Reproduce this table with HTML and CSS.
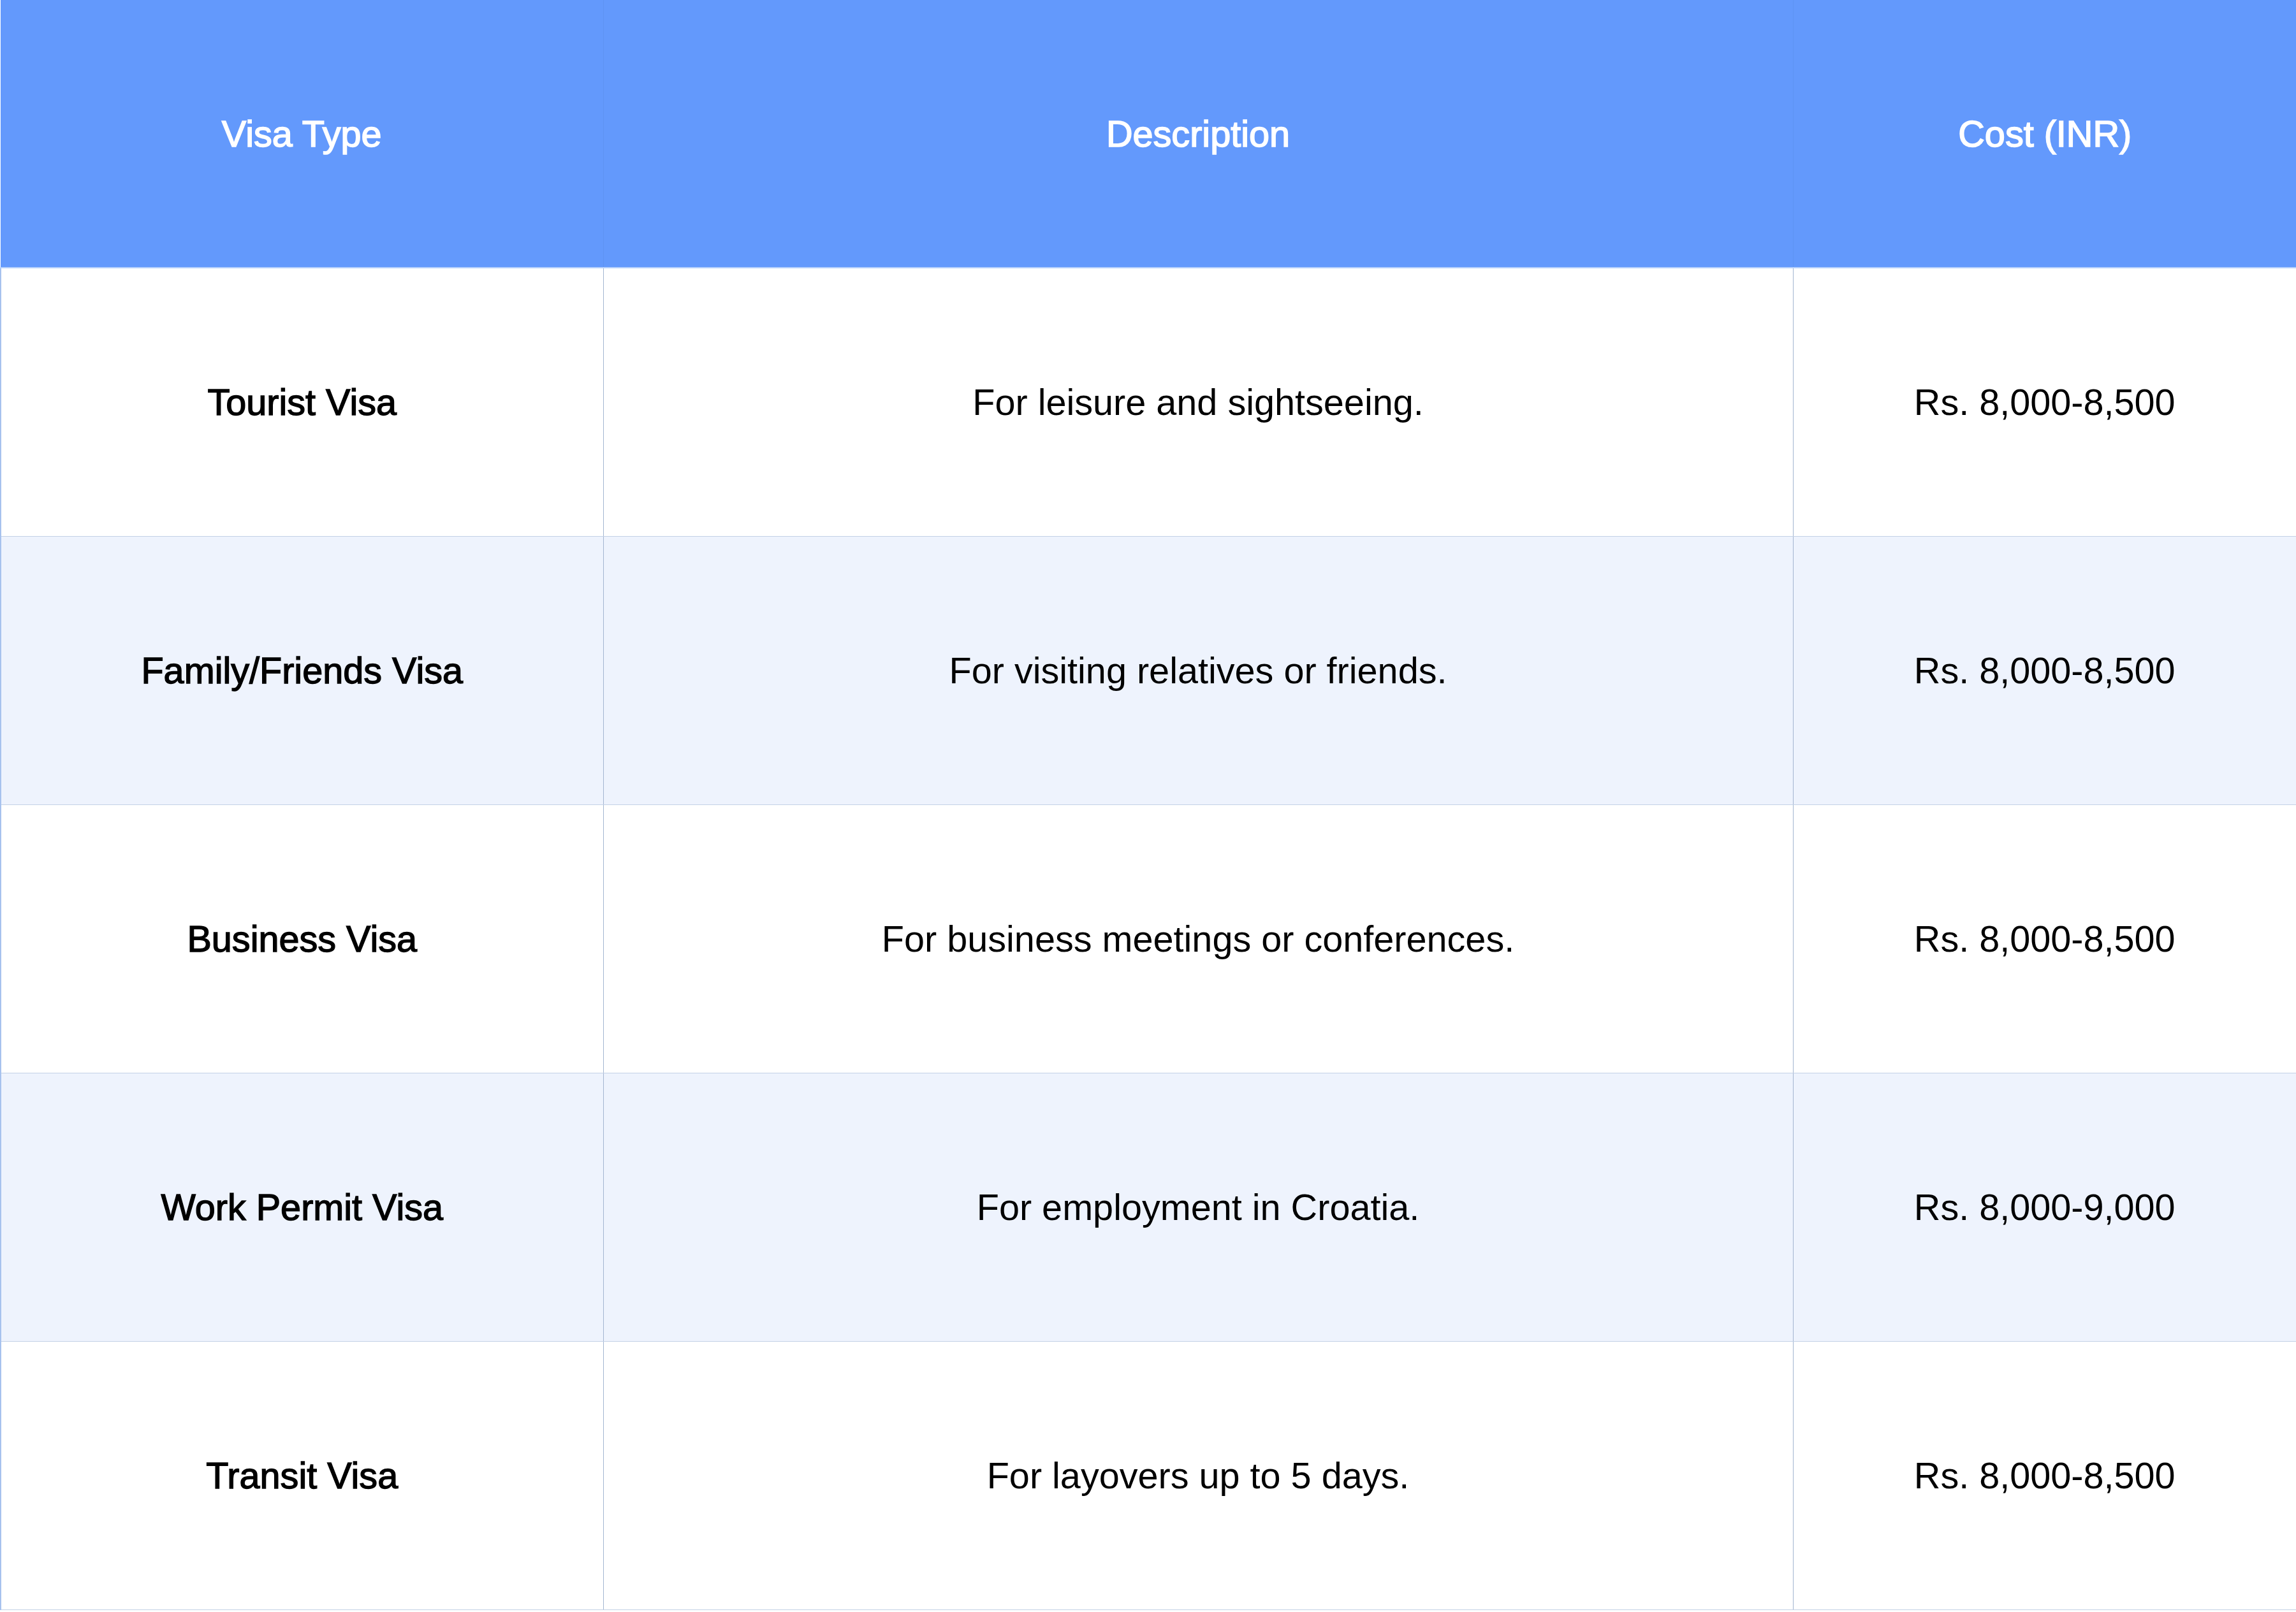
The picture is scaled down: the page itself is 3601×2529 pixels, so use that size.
FILE: index.html
```html
<!DOCTYPE html>
<html lang="en">
<head>
<meta charset="utf-8">
<title>Croatia Visa Types</title>
<link rel="stylesheet" href="styles.css">
</head>
<body>
<table class="visa-table">
  <colgroup>
    <col class="col-type">
    <col class="col-desc">
    <col class="col-cost">
  </colgroup>
  <thead>
    <tr class="head-row">
      <th>Visa Type</th>
      <th>Description</th>
      <th>Cost (INR)</th>
    </tr>
  </thead>
  <tbody>
    <tr class="row">
      <td class="type">Tourist Visa</td>
      <td>For leisure and sightseeing.</td>
      <td>Rs. 8,000-8,500</td>
    </tr>
    <tr class="row alt">
      <td class="type">Family/Friends Visa</td>
      <td>For visiting relatives or friends.</td>
      <td>Rs. 8,000-8,500</td>
    </tr>
    <tr class="row">
      <td class="type">Business Visa</td>
      <td>For business meetings or conferences.</td>
      <td>Rs. 8,000-8,500</td>
    </tr>
    <tr class="row alt">
      <td class="type">Work Permit Visa</td>
      <td>For employment in Croatia.</td>
      <td>Rs. 8,000-9,000</td>
    </tr>
    <tr class="row">
      <td class="type">Transit Visa</td>
      <td>For layovers up to 5 days.</td>
      <td>Rs. 8,000-8,500</td>
    </tr>
  </tbody>
</table>
</body>
</html>
```

FILE: styles.css
```css
html, body {
  margin: 0;
  padding: 0;
  background: #ffffff;
}

.visa-table {
  width: 3601px;
  border-collapse: collapse;
  table-layout: fixed;
  font-family: "Liberation Sans", Arial, sans-serif;
  font-size: 57.6px;
  color: #000000;
}

.col-type { width: 945px; }
.col-desc { width: 1866px; }
.col-cost { width: 790px; }

.head-row {
  height: 420px;
  background: #6399fc;
}

.head-row th {
  color: #ffffff;
  font-weight: normal;
  -webkit-text-stroke: 1.6px #ffffff;
  text-align: center;
  vertical-align: middle;
  padding: 0;
  border-left: 1px solid #5e93f3;
  border-bottom: 2px solid #b9d2fb;
}

.head-row th:first-child { border-left: none; }

.row {
  height: 421px;
  background: #ffffff;
}

.row.alt {
  background: #eef3fd;
}

.row td {
  text-align: center;
  vertical-align: middle;
  padding: 0;
  border: 1px solid #c3d1e6;
  border-left-color: #a3b5d0;
  border-right-color: #a3b5d0;
}

.row td:first-child { border-left: 2px solid #a7c2ee; }
.row td:last-child { border-right: 2px solid #a7c2ee; }

.row td.type {
  -webkit-text-stroke: 1.4px #000000;
}
```
